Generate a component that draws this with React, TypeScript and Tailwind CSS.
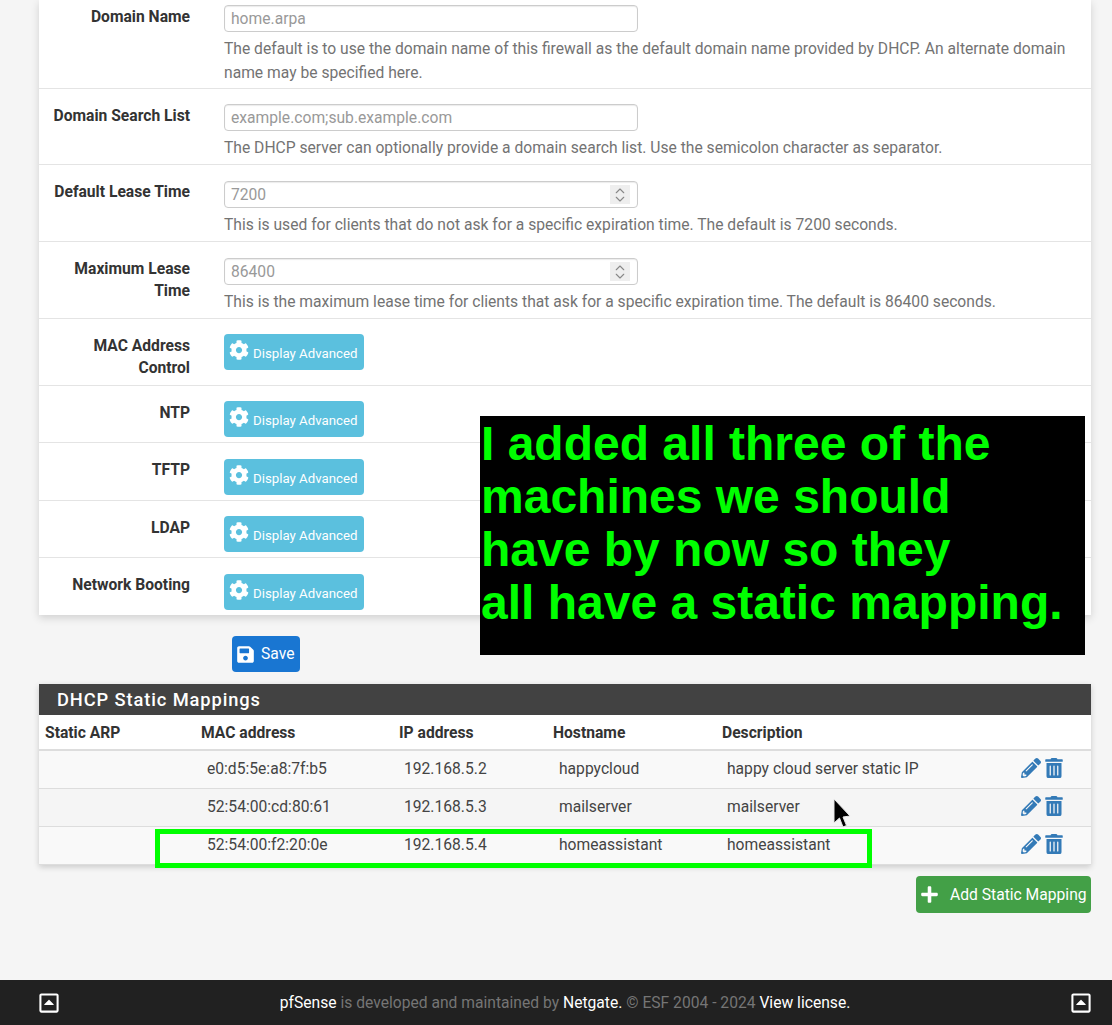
import { FaCog, FaSave, FaPlus, FaPencilAlt, FaTrashAlt, FaRegCaretSquareUp } from "react-icons/fa";
import { LuChevronsUpDown } from "react-icons/lu";

const font = "font-['Roboto',sans-serif]";

function Row({ label, className, tight, children }: { label: React.ReactNode; className: string; tight?: boolean; children: React.ReactNode }) {
  return (
    <div className={`flex border-b border-[#e4e4e4] ${className}`}>
      <div className={`w-[151px] shrink-0 text-right text-[15.65px] leading-[22px] font-bold text-[#333] ${tight ? "" : "mt-[1px]"}`}>{label}</div>
      <div className="ml-[34px] min-w-0 flex-1 pr-[20px]">{children}</div>
    </div>
  );
}

function Field({ placeholder, number }: { placeholder: string; number?: boolean }) {
  return (
    <div className="flex h-[27px] w-[414px] items-center justify-between rounded-[4px] border border-[#ccc] bg-white pr-[7px] pl-[6px] shadow-[inset_0_1px_1px_rgba(0,0,0,0.08)]">
      <span className="text-[15.65px] text-[#999]">{placeholder}</span>
      {number && (
        <span className="flex h-[19px] w-[20px] items-center justify-center bg-[#eee] text-[#888]">
          <LuChevronsUpDown size={18} strokeWidth={1.5} />
        </span>
      )}
    </div>
  );
}

function Help({ children }: { children: React.ReactNode }) {
  return <p className="mt-[5px] text-[15.65px] leading-[24px] text-[#737373]">{children}</p>;
}

function Advanced() {
  return (
    <div className="flex h-[36px] w-[140px] items-center rounded-[4px] bg-[#5bc0de] pl-[5px] text-white">
      <FaCog size={20} className="mb-[5px]" />
      <span className="mt-[4px] ml-[4px] text-[13.25px]">Display Advanced</span>
    </div>
  );
}

const mappings = [
  { mac: "e0:d5:5e:a8:7f:b5", ip: "192.168.5.2", host: "happycloud", desc: "happy cloud server static IP", h: "h-[38px] bg-[#f9f9f9]" },
  { mac: "52:54:00:cd:80:61", ip: "192.168.5.3", host: "mailserver", desc: "mailserver", h: "h-[38px] bg-[#f5f5f5]" },
  { mac: "52:54:00:f2:20:0e", ip: "192.168.5.4", host: "homeassistant", desc: "homeassistant", h: "h-[38px] bg-[#f9f9f9]" },
];

export default function App() {
  return (
    <div className={`relative h-[1025px] w-[1112px] overflow-hidden bg-[#f5f5f5] ${font}`}>
      <div className="mr-[21px] ml-[39px] bg-white shadow-[0_3px_8px_rgba(0,0,0,0.15)]">
        <Row label="Domain Name" className="h-[89px] pt-[5px]">
          <Field placeholder="home.arpa" />
          <Help>
            The default is to use the domain name of this firewall as the default domain name provided by DHCP. An alternate domain name may be specified here.
          </Help>
        </Row>
        <Row label="Domain Search List" className="h-[76px] pt-[15px]">
          <Field placeholder="example.com;sub.example.com" />
          <Help>The DHCP server can optionally provide a domain search list. Use the semicolon character as separator.</Help>
        </Row>
        <Row label="Default Lease Time" className="h-[77px] pt-[16px]" tight>
          <Field placeholder="7200" number />
          <Help>This is used for clients that do not ask for a specific expiration time. The default is 7200 seconds.</Help>
        </Row>
        <Row label={<>Maximum Lease<br />Time</>} className="h-[77px] pt-[16px]" tight>
          <Field placeholder="86400" number />
          <Help>This is the maximum lease time for clients that ask for a specific expiration time. The default is 86400 seconds.</Help>
        </Row>
        <Row label={<>MAC Address<br />Control</>} className="h-[67px] pt-[15px]"><Advanced /></Row>
        <Row label="NTP" className="h-[57px] pt-[15px]"><Advanced /></Row>
        <Row label="TFTP" className="h-[58px] pt-[16px]" tight><Advanced /></Row>
        <Row label="LDAP" className="h-[57px] pt-[15px]"><Advanced /></Row>
        <Row label="Network Booting" className="h-[57px] border-b-0 pt-[16px]" tight><Advanced /></Row>
      </div>

      <div className="mt-[21px] ml-[232px] flex h-[36px] w-[68px] items-center rounded-[4px] bg-[#1976d2] pl-[4px] text-white">
        <FaSave size={19} />
        <span className="ml-[6px] text-[15.65px]">Save</span>
      </div>

      <div className="mt-[12px] mr-[21px] ml-[39px] bg-white shadow-[0_2px_6px_rgba(0,0,0,0.18)]">
        <div className="flex h-[31px] items-center bg-[#424242] pl-[18px] text-[18.3px] font-medium tracking-[0.9px] text-white">DHCP Static Mappings</div>
        <div className="flex h-[36px] items-center border-b-2 border-[#ddd] pt-[2px] text-[15.65px] font-bold text-[#333]">
          <div className="w-[162px] pl-[6px]">Static ARP</div>
          <div className="w-[198px]">MAC address</div>
          <div className="w-[154px]">IP address</div>
          <div className="w-[169px]">Hostname</div>
          <div>Description</div>
        </div>
        {mappings.map((m) => (
          <div key={m.mac} className={`flex items-center border-b border-[#ddd] pb-[2px] text-[15.65px] text-[#444] ${m.h}`}>
            <div className="w-[168px]" />
            <div className="w-[197px]">{m.mac}</div>
            <div className="w-[155px]">{m.ip}</div>
            <div className="w-[168px]">{m.host}</div>
            <div className="w-[294px]">{m.desc}</div>
            <div className="mb-[1px] flex items-center gap-[3px] text-[#337ab7]">
              <FaPencilAlt size={20} />
              <FaTrashAlt size={20} />
            </div>
          </div>
        ))}
      </div>

      <div className="mt-[11px] mr-[21px] flex justify-end">
        <div className="flex h-[37px] w-[175px] items-center rounded-[4px] bg-[#43a047] pl-[4px] text-white">
          <FaPlus size={19} />
          <span className="ml-[11px] text-[15.65px]">Add Static Mapping</span>
        </div>
      </div>

      <div className="absolute right-0 bottom-0 left-0 flex h-[45px] items-center justify-between bg-[#212121] pr-[20px] pl-[38px] text-[15.65px] text-[#757575]">
        <FaRegCaretSquareUp size={22} className="text-white" />
        <div>
          <span className="text-white">pfSense</span> is developed and maintained by <span className="text-white">Netgate.</span> © ESF 2004 - 2024 <span className="text-white">View license.</span>
        </div>
        <FaRegCaretSquareUp size={22} className="text-white" />
      </div>

      {/* video overlays */}
      <div className="absolute top-[416px] left-[480px] h-[239px] w-[605px] bg-black pt-[1px] pl-[1px] font-['Liberation_Sans',sans-serif] text-[48px] leading-[53px] font-bold text-[#00ff00]">
        I added all three of the<br />machines we should<br />have by now so they<br />all have a static mapping.
      </div>
      <div className="absolute top-[829px] left-[155px] h-[39px] w-[717px] border-[5px] border-[#00ff00]" />
      <svg className="absolute top-[798px] left-[832px]" width="20" height="34" viewBox="0 0 20 34">
        <path d="M2 1 L2 25 L7.5 20 L11 29 L14.5 27.5 L11 19 L18 18 Z" fill="#000" stroke="#e8e8e8" strokeWidth="1" />
      </svg>
    </div>
  );
}
